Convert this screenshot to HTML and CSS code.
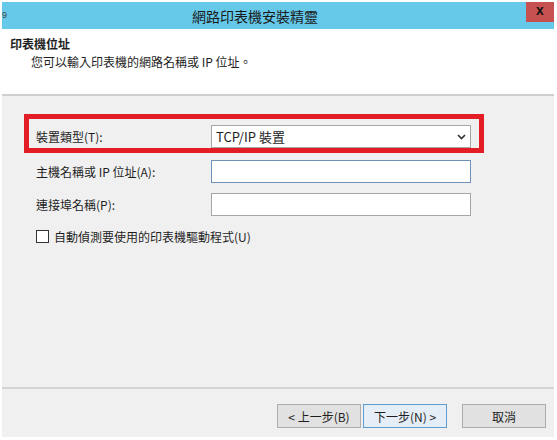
FILE: index.html
```html
<!DOCTYPE html>
<html lang="zh-Hant">
<head>
<meta charset="utf-8">
<link rel="stylesheet" href="styles.css">
</head>
<body>
<div class="window">
  <div class="titlebar">
    <span class="app-icon">9</span>
    <span class="title">網路印表機安裝精靈</span>
    <span class="close">x</span>
  </div>
  <div class="header">
    <div class="h-title">印表機位址</div>
    <div class="h-sub">您可以輸入印表機的網路名稱或 IP 位址。</div>
  </div>
  <div class="content">
    <div class="highlight">
      <div class="row first">
        <label class="lbl">裝置類型(T):</label>
        <div class="select"><span>TCP/IP 裝置</span>
          <svg class="chev" width="9" height="6" viewBox="0 0 9 6"><path d="M1 1 L4.5 4.5 L8 1" fill="none" stroke="#333" stroke-width="1.6"/></svg>
        </div>
      </div>
    </div>
    <div class="row r2">
      <label class="lbl">主機名稱或 IP 位址(A):</label>
      <div class="input focus"></div>
    </div>
    <div class="row r3">
      <label class="lbl">連接埠名稱(P):</label>
      <div class="input"></div>
    </div>
    <div class="check-row">
      <span class="box"></span>
      <span class="lbl">自動偵測要使用的印表機驅動程式(U)</span>
    </div>
  </div>
  <div class="footer">
    <button class="btn">&lt; 上一步(B)</button>
    <button class="btn primary">下一步(N) &gt;</button>
    <button class="btn cancel">取消</button>
  </div>
</div>
</body>
</html>
```

FILE: styles.css
```css
html, body {
  margin: 0;
  padding: 0;
  background: #ffffff;
}
body {
  font-family: "Noto Sans CJK TC", "Liberation Sans", sans-serif;
  color: #1e1e1e;
  font-size: 12px;
}
.window {
  margin: 2px 0 0 2px;
  width: 552px;
  height: 435px;
  background: #f0f0f0;
  display: flex;
  flex-direction: column;
}
.titlebar {
  position: relative;
  height: 27px;
  background: #66c9ea;
  display: flex;
  align-items: center;
  justify-content: center;
  padding-right: 46px;
}
.app-icon {
  position: absolute;
  left: 0;
  top: 9px;
  font-size: 9px;
  line-height: 9px;
  color: #444;
  font-family: "Liberation Sans", sans-serif;
}
.title {
  font-size: 14px;
  color: #1a1a1a;
}
.close {
  position: absolute;
  right: 0;
  top: 0;
  width: 28px;
  height: 20px;
  background: #c75050;
  color: #111;
  font-family: "Liberation Sans", sans-serif;
  font-weight: bold;
  font-size: 14px;
  line-height: 17px;
  text-align: center;
}
.header {
  height: 67px;
  background: #ffffff;
  border-bottom: 2px solid #cfcfcf;
  padding: 7px 0 0 8px;
  box-sizing: border-box;
}
.h-title {
  font-weight: bold;
  font-size: 12px;
  line-height: 16px;
}
.h-sub {
  font-size: 12px;
  line-height: 16px;
  padding-left: 21px;
  margin-top: 2px;
}
.content {
  flex: 1;
  padding: 18px 0 0 22px;
  display: flex;
  flex-direction: column;
}
.highlight {
  width: 443px;
  border: 5px solid #e21d25;
  padding: 6px 0 0 7px;
  box-sizing: content-box;
  height: 23px;
}
.row {
  display: flex;
  align-items: center;
  padding-left: 12px;
}
.row.first {
  padding-left: 0;
}
.row.r2 {
  margin-top: 7px;
}
.row.r3 {
  margin-top: 10px;
}
.lbl {
  width: 175px;
  font-size: 12px;
}
.select, .input {
  width: 258px;
  height: 21px;
  background: #fff;
  border: 1px solid #a6a6a6;
}
.select {
  display: flex;
  align-items: center;
  justify-content: space-between;
  padding: 0 4px 0 4px;
  box-sizing: border-box;
  width: 260px;
  height: 23px;
  font-size: 13px;
}
.input.focus {
  border-color: #6f93b8;
}
.check-row {
  display: flex;
  align-items: center;
  padding-left: 12px;
  margin-top: 12px;
}
.box {
  width: 11px;
  height: 11px;
  border: 1px solid #333;
  background: #fff;
  margin-right: 5px;
}
.check-row .lbl {
  width: auto;
}
.footer {
  height: 50px;
  border-top: 2px solid #d4d4d4;
  display: flex;
  align-items: flex-start;
  padding: 15px 0 0 275px;
  box-sizing: border-box;
}
.btn {
  width: 84px;
  height: 24px;
  background: #e1e1e1;
  border: 1px solid #adadad;
  font-family: "Noto Sans CJK TC", "Liberation Sans", sans-serif;
  font-size: 12px;
  color: #1e1e1e;
  padding: 0;
  margin: 0 2px 0 0;
}
.btn.primary {
  background: #e5eef6;
  border-color: #5f9ccf;
}
.btn.cancel {
  margin-left: 13px;
}
```
